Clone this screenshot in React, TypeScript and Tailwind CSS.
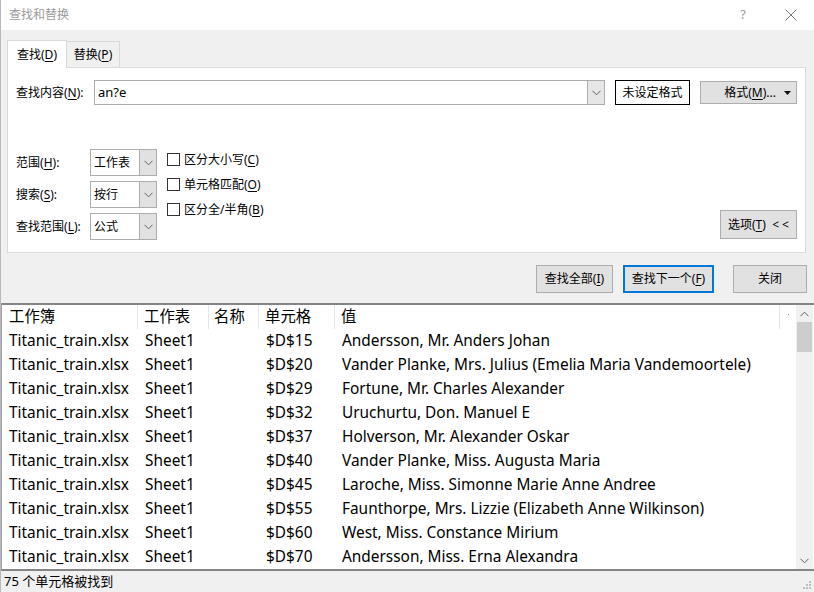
import type { ReactNode } from "react"

const cjk = "font-['Segoe_UI','Noto_Sans','Noto_Sans_CJK_SC',sans-serif]"

const rows = [
  ["$D$15", "Andersson, Mr. Anders Johan"],
  ["$D$20", "Vander Planke, Mrs. Julius (Emelia Maria Vandemoortele)"],
  ["$D$29", "Fortune, Mr. Charles Alexander"],
  ["$D$32", "Uruchurtu, Don. Manuel E"],
  ["$D$37", "Holverson, Mr. Alexander Oskar"],
  ["$D$40", "Vander Planke, Miss. Augusta Maria"],
  ["$D$45", "Laroche, Miss. Simonne Marie Anne Andree"],
  ["$D$55", "Faunthorpe, Mrs. Lizzie (Elizabeth Anne Wilkinson)"],
  ["$D$60", "West, Miss. Constance Mirium"],
  ["$D$70", "Andersson, Miss. Erna Alexandra"],
]

function U({ children }: { children: ReactNode }) {
  return <span className="underline underline-offset-2">{children}</span>
}

function Chevron({ up = false }: { up?: boolean }) {
  return (
    <svg width="9" height="6" viewBox="0 0 9 6" className={up ? "rotate-180" : ""}>
      <path d="M0.5 0.8 L4.5 4.8 L8.5 0.8" fill="none" stroke="#606060" strokeWidth="1" />
    </svg>
  )
}

function Select({ value }: { value: string }) {
  return (
    <div className="flex w-[67px] h-[27px] border border-[#adadad] bg-white">
      <div className="flex-1 flex items-center pl-[3px] text-[12px]">{value}</div>
      <div className="w-[17px] flex items-center justify-center bg-[#e1e1e1] border-l border-[#adadad]">
        <Chevron />
      </div>
    </div>
  )
}

function Check({ children }: { children: ReactNode }) {
  return (
    <div className="flex items-center h-[25px] gap-[4px] text-[12px]">
      <div className="w-[13px] h-[13px] border border-[#333] bg-white" />
      <span>{children}</span>
    </div>
  )
}

export default function App() {
  return (
    <div className={`w-[814px] h-[592px] flex flex-col bg-[#f0f0f0] border-l border-[#b9b9b9] text-black ${cjk}`}>
      <div className="h-[30px] shrink-0 bg-white flex items-center pl-[8px] text-[12px] text-[#9a9a9a]">
        <span className="flex-1">查找和替换</span>
        <span className="w-[20px] text-center text-[13px] mr-[32px]">?</span>
        <svg width="12" height="12" viewBox="0 0 12 12" className="mr-[17px]">
          <path d="M0.5 0.5 L11.5 11.5 M11.5 0.5 L0.5 11.5" stroke="#7a7a7a" strokeWidth="1" />
        </svg>
      </div>

      <div className="pl-[6px] pt-[10px] shrink-0">
        <div className="flex items-end h-[27px]">
          <div className="relative z-10 -mb-px w-[60px] h-[28px] bg-white border border-[#d9d9d9] border-b-0 flex items-center justify-center text-[12px]">
            查找(<U>D</U>)
          </div>
          <div className="w-[53px] h-[26px] bg-[#f0f0f0] border border-[#d9d9d9] border-l-0 border-b-0 flex items-center justify-center text-[12px]">
            替换(<U>P</U>)
          </div>
        </div>
        <div className="w-[799px] h-[186px] bg-white border border-[#d9d9d9] pl-[8px] pt-[12px] pr-[7px] flex flex-col">
          <div className="flex items-center h-[25px]">
            <span className="w-[78px] text-[12px]">查找内容(<U>N</U>):</span>
            <div className="w-[511px] h-[25px] flex border border-[#adadad] bg-white">
              <div className="flex-1 flex items-center pl-[3px] text-[13px]">an?e</div>
              <div className="w-[17px] flex items-center justify-center bg-[#e6e6e6] border-l border-[#adadad]">
                <Chevron />
              </div>
            </div>
            <div className="ml-[10px] w-[75px] h-[25px] border border-black flex items-center justify-center text-[12px]">
              未设定格式
            </div>
            <div className="ml-[10px] w-[97px] h-[23px] border border-[#adadad] bg-[#e1e1e1] flex items-center justify-end pr-[5px] text-[12px]">
              <span className="mr-[8px]">格式(<U>M</U>)...</span>
              <svg width="7" height="4" viewBox="0 0 7 4">
                <path d="M0 0 H7 L3.5 4 Z" fill="#111" />
              </svg>
            </div>
          </div>

          <div className="flex mt-[44px]">
            <div className="flex flex-col gap-[5px]">
              {[
                ["范围", "H", "工作表"],
                ["搜索", "S", "按行"],
                ["查找范围", "L", "公式"],
              ].map(([l, k, v]) => (
                <div key={k} className="flex items-center">
                  <span className="w-[74px] text-[12px]">
                    {l}(<U>{k}</U>):
                  </span>
                  <Select value={v} />
                </div>
              ))}
            </div>
            <div className="ml-[10px] -mt-[2px] flex flex-col">
              <Check>区分大小写(<U>C</U>)</Check>
              <Check>单元格匹配(<U>O</U>)</Check>
              <Check>区分全/半角(<U>B</U>)</Check>
            </div>
            <div className="flex-1 flex justify-end items-end">
              <div className="w-[77px] h-[29px] mb-[1px] mr-[1px] border border-[#adadad] bg-[#e1e1e1] flex items-center justify-center text-[12px]">
                选项(<U>T</U>)&nbsp;&nbsp;&lt; &lt;
              </div>
            </div>
          </div>
        </div>
      </div>

      <div className="flex justify-end gap-[10px] pr-[7px] pt-[12px] h-[50px] shrink-0 text-[12px]">
        <div className="w-[77px] h-[28px] border border-[#adadad] bg-[#e1e1e1] flex items-center justify-center">
          查找全部(<U>I</U>)
        </div>
        <div className="w-[91px] h-[28px] border-2 border-[#0078d7] bg-[#e1e1e1] flex items-center justify-center">
          查找下一个(<U>F</U>)
        </div>
        <div className="ml-[9px] w-[74px] h-[28px] border border-[#adadad] bg-[#e1e1e1] flex items-center justify-center">
          关闭
        </div>
      </div>

      <div className="h-[268px] shrink-0 flex bg-white border-t-2 border-b-2 border-[#858585] border-l border-l-[#a0a0a0] text-[15.4px]">
        <div className="flex-1 flex flex-col">
          <div className="h-[24px] flex items-center">
            <div className="w-[136px] h-full pl-[7px] flex items-center border-r border-[#e5e5e5]">工作簿</div>
            <div className="w-[71px] h-full pl-[6px] flex items-center border-r border-[#e5e5e5]">工作表</div>
            <div className="w-[50px] h-full pl-[5px] flex items-center border-r border-[#e5e5e5]">名称</div>
            <div className="w-[76px] h-full pl-[6px] flex items-center border-r border-[#e5e5e5]">单元格</div>
            <div className="w-[445px] h-full pl-[6px] flex items-center border-r border-[#e5e5e5]">值</div>
            <div className="flex-1 h-full flex items-start justify-center pt-[9px]">
              <div className="w-[1px] h-[1px] bg-[#c07a2a]" />
            </div>
          </div>
          {rows.map(([cell, value]) => (
            <div key={cell} className="h-[24px] flex items-center whitespace-nowrap">
              <div className="w-[136px] pl-[7px]">Titanic_train.xlsx</div>
              <div className="w-[71px] pl-[7px]">Sheet1</div>
              <div className="w-[50px]" />
              <div className="w-[76px] pl-[7px]">{cell}</div>
              <div className="pl-[7px]">{value}</div>
            </div>
          ))}
        </div>
        <div className="w-[17px] flex flex-col bg-[#f0f0f0] mr-[1px]">
          <div className="h-[17px] flex items-center justify-center">
            <Chevron up />
          </div>
          <div className="mx-[1px] h-[30px] bg-[#cdcdcd]" />
          <div className="flex-1" />
          <div className="h-[17px] flex items-center justify-center">
            <Chevron />
          </div>
        </div>
      </div>

      <div className="flex-1 flex items-center pl-[3px] text-[13px]">
        <span className="flex-1">75 个单元格被找到</span>
        <svg width="10" height="10" viewBox="0 0 10 10" className="mr-[2px] self-end mb-[2px]">
          <rect x="7" y="1" width="2" height="2" fill="#bdbdbd" />
          <rect x="4" y="4" width="2" height="2" fill="#bdbdbd" />
          <rect x="7" y="4" width="2" height="2" fill="#bdbdbd" />
          <rect x="1" y="7" width="2" height="2" fill="#bdbdbd" />
          <rect x="4" y="7" width="2" height="2" fill="#bdbdbd" />
          <rect x="7" y="7" width="2" height="2" fill="#bdbdbd" />
        </svg>
      </div>
    </div>
  )
}
